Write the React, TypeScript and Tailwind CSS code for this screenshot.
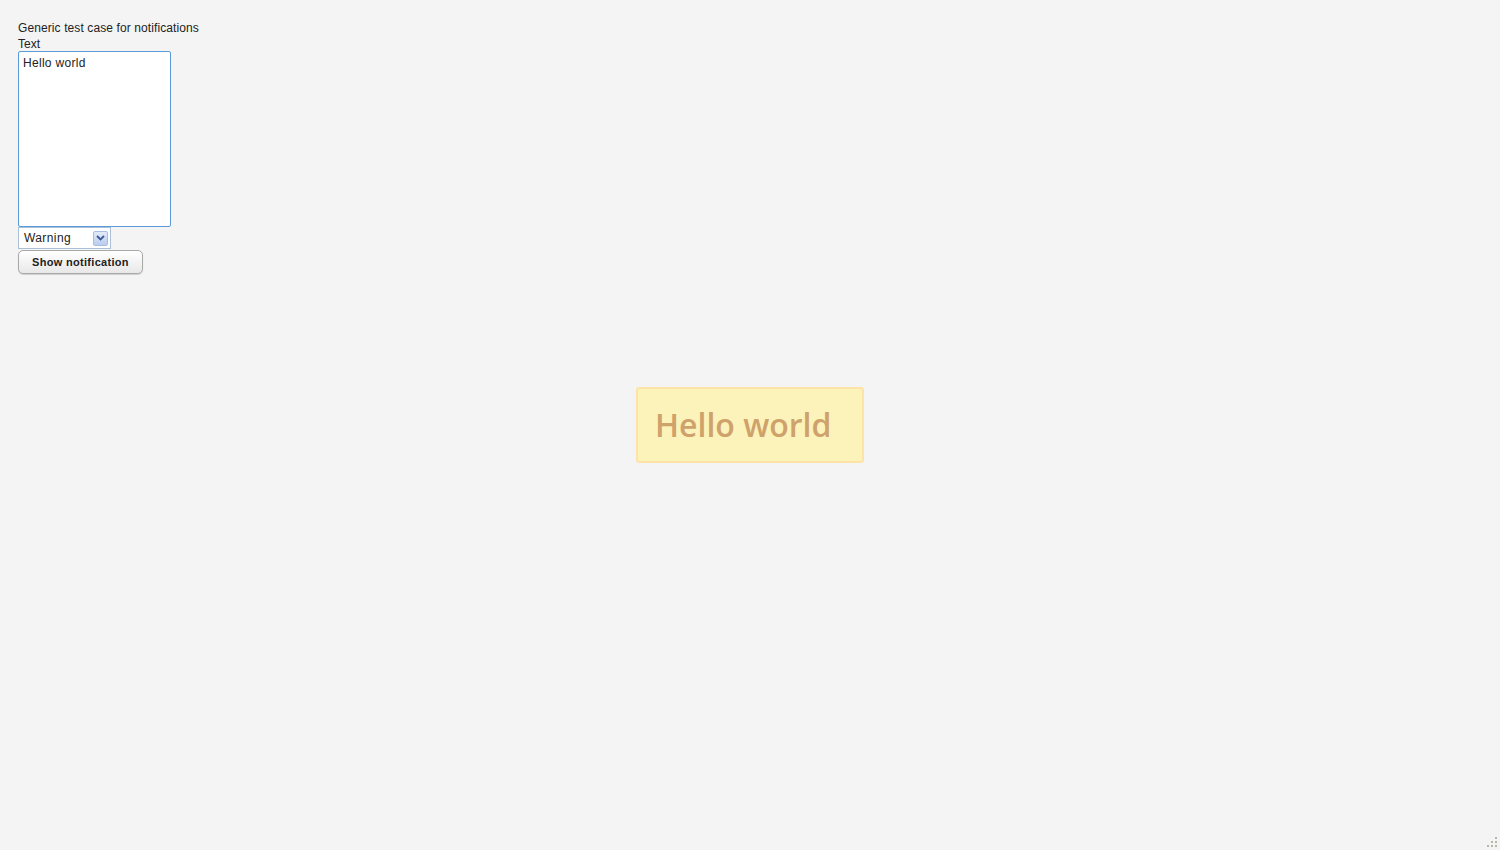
export default function App() {
  return (
    <div className="relative h-[850px] w-[1500px] overflow-hidden bg-[#f4f4f4] font-['Liberation_Sans',Arial,sans-serif] text-[12px] text-[#222]">
      <div className="flex flex-col items-start pl-[18px] pt-[20px]">
        <div className="h-[16px] leading-[16px] tracking-[0.1px]">Generic test case for notifications</div>
        <div className="h-[15px] leading-[16px]">Text</div>
        <textarea
          defaultValue="Hello world"
          className="h-[176px] w-[153px] resize-none rounded-[2px] border border-[#5b9bd9] bg-white px-[4px] py-[3px] text-[12px] leading-[16px] tracking-[0.3px] text-[#222] outline-none"
        />
        <div className="flex h-[22px] w-[93px] items-center justify-between border border-[#a9c0d8] bg-white pl-[5px] pr-[2px]">
          <span className="text-[12px] tracking-[0.4px]">Warning</span>
          <span className="flex h-[15px] w-[15px] items-center justify-center rounded-[2px] border border-[#a7bde0] bg-gradient-to-b from-[#e2ebfa] to-[#b9cdf0]">
            <svg width="9" height="6" viewBox="0 0 9 6">
              <path d="M1 1l3.5 3.5L8 1" fill="none" stroke="#3d5a96" strokeWidth="1.8" />
            </svg>
          </span>
        </div>
        <button className="mt-[1px] h-[24px] w-[125px] rounded-[5px] border border-[#a8a8a8] bg-gradient-to-b from-white to-[#e8e8e8] text-[11px] font-bold tracking-[0.3px] text-[#222] shadow-[0_1px_1px_rgba(0,0,0,0.15)]">
          Show notification
        </button>
      </div>

      <div className="absolute left-[636px] top-[387px] flex h-[76px] w-[228px] items-center rounded-[3px] border-2 border-[#fde3a7] bg-[#fcf3ba] pl-[17px]">
        <span className="font-['Open_Sans',sans-serif] text-[32px] font-semibold leading-none text-[#cfa16b]">Hello world</span>
      </div>

      <svg className="absolute bottom-[2px] right-[2px]" width="11" height="11" viewBox="0 0 11 11">
        <rect x="8" y="0" width="2" height="2" fill="#b8b8a8" />
        <rect x="4" y="4" width="2" height="2" fill="#b8b8a8" />
        <rect x="8" y="4" width="2" height="2" fill="#b8b8a8" />
        <rect x="0" y="8" width="2" height="2" fill="#b8b8a8" />
        <rect x="4" y="8" width="2" height="2" fill="#b8b8a8" />
        <rect x="8" y="8" width="2" height="2" fill="#b8b8a8" />
      </svg>
    </div>
  );
}
